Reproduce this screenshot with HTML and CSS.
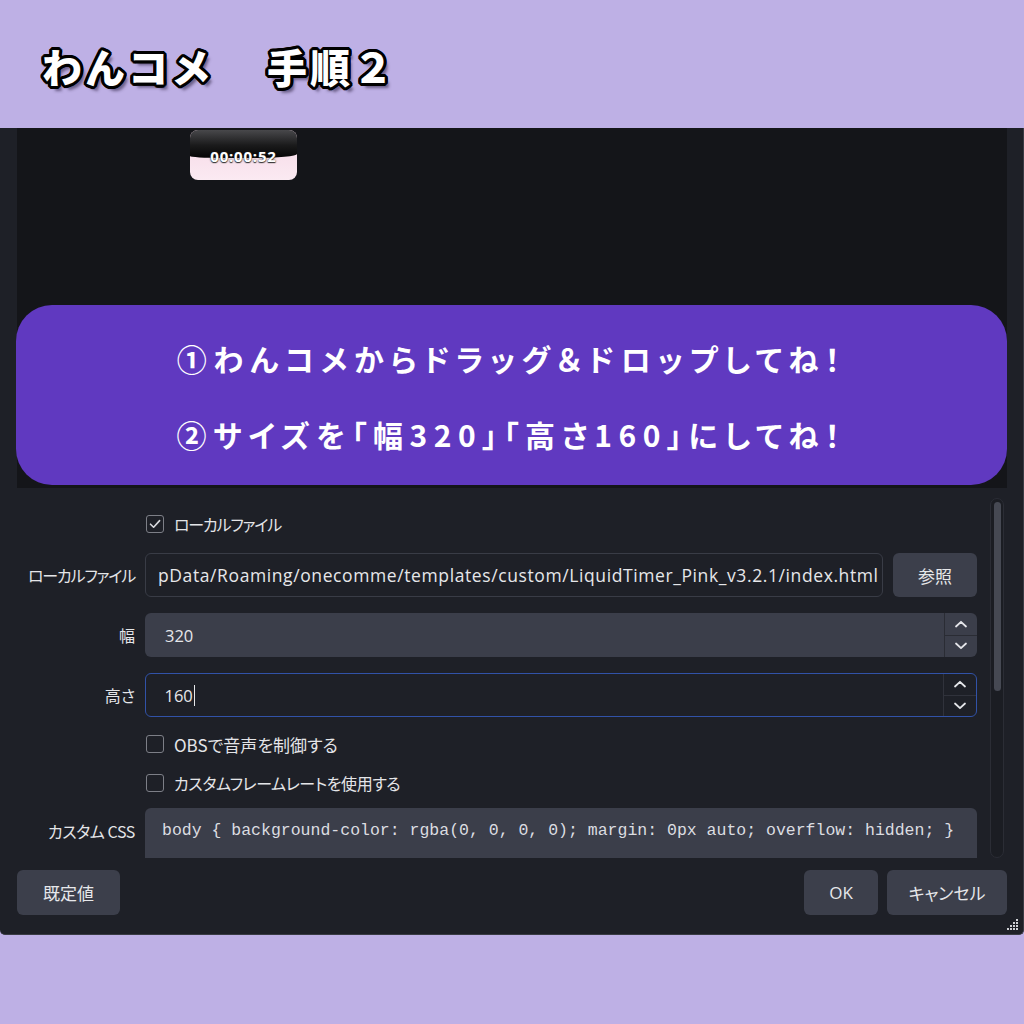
FILE: index.html
```html
<!DOCTYPE html>
<html lang="ja">
<head>
<meta charset="utf-8">
<title>わんコメ 手順2</title>
<link rel="stylesheet" href="styles.css">
</head>
<body>
<header class="top">
  <h1 class="title">わんコメ<span class="wide-space">　</span>手順２</h1>
</header>
<main class="dialog">
  <section class="preview">
    <div class="timer">
      <div class="timer-top"></div>
      <span class="timer-text">00:00:52</span>
    </div>
    <div class="banner">
      <p class="banner-line">①わんコメからドラッグ＆ドロップしてね！</p>
      <p class="banner-line">②サイズを「幅320」「高さ160」にしてね！</p>
    </div>
  </section>
  <section class="props">
    <div class="form">
      <div class="row row-check first">
        <span class="label"></span>
        <label class="check"><span class="box"><svg viewBox="0 0 18 18" width="18" height="18"><path d="M4.5 9.2 L7.6 12.2 L13.6 5.6" fill="none" stroke="#d8d9dd" stroke-width="1.6" stroke-linecap="round" stroke-linejoin="round"/></svg></span><span class="kana">ローカルファイル</span></label>
      </div>
      <div class="row row-field gap15">
        <span class="label kana">ローカルファイル</span>
        <div class="file-group">
          <div class="input file-input">pData/Roaming/onecomme/templates/custom/LiquidTimer_Pink_v3.2.1/index.html</div>
          <button class="btn browse">参照</button>
        </div>
      </div>
      <div class="row row-field gap16">
        <span class="label">幅</span>
        <div class="spin filled">
          <span class="spin-value">320</span>
          <span class="spin-btns">
            <span class="spin-up"><svg viewBox="0 0 14 8" width="14" height="8"><path d="M2 6.5 L7 1.8 L12 6.5" fill="none" stroke="#e4e5e9" stroke-width="1.8" stroke-linecap="round" stroke-linejoin="round"/></svg></span>
            <span class="spin-down"><svg viewBox="0 0 14 8" width="14" height="8"><path d="M2 1.5 L7 6.2 L12 1.5" fill="none" stroke="#e4e5e9" stroke-width="1.8" stroke-linecap="round" stroke-linejoin="round"/></svg></span>
          </span>
        </div>
      </div>
      <div class="row row-field gap16">
        <span class="label">高さ</span>
        <div class="spin focused">
          <span class="spin-value">160<span class="caret"></span></span>
          <span class="spin-btns">
            <span class="spin-up"><svg viewBox="0 0 14 8" width="14" height="8"><path d="M2 6.5 L7 1.8 L12 6.5" fill="none" stroke="#e4e5e9" stroke-width="1.8" stroke-linecap="round" stroke-linejoin="round"/></svg></span>
            <span class="spin-down"><svg viewBox="0 0 14 8" width="14" height="8"><path d="M2 1.5 L7 6.2 L12 1.5" fill="none" stroke="#e4e5e9" stroke-width="1.8" stroke-linecap="round" stroke-linejoin="round"/></svg></span>
          </span>
        </div>
      </div>
      <div class="row row-check gap13">
        <span class="label"></span>
        <label class="check"><span class="box"></span><span class="wide">OBSで音声を制御する</span></label>
      </div>
      <div class="row row-check gap11">
        <span class="label"></span>
        <label class="check"><span class="box"></span><span class="narrow">カスタムフレームレートを使用する</span></label>
      </div>
      <div class="row row-area gap11">
        <span class="label label-top narrow">カスタム CSS</span>
        <div class="textarea">body { background-color: rgba(0, 0, 0, 0); margin: 0px auto; overflow: hidden; }</div>
      </div>
    </div>
    <div class="scrollbar"><div class="thumb"></div></div>
  </section>
  <footer class="buttons">
    <button class="btn defaults">既定値</button>
    <span class="spacer"></span>
    <button class="btn ok">OK</button>
    <button class="btn cancel">キャンセル</button>
  </footer>
  <svg class="grip" viewBox="0 0 12 12" width="12" height="12">
    <rect x="9" y="0" width="2" height="2" fill="#cfd0d4"/>
    <rect x="6" y="3" width="2" height="2" fill="#cfd0d4"/>
    <rect x="9" y="3" width="2" height="2" fill="#cfd0d4"/>
    <rect x="3" y="6" width="2" height="2" fill="#cfd0d4"/>
    <rect x="6" y="6" width="2" height="2" fill="#cfd0d4"/>
    <rect x="9" y="6" width="2" height="2" fill="#cfd0d4"/>
    <rect x="0" y="9" width="2" height="2" fill="#cfd0d4"/>
    <rect x="3" y="9" width="2" height="2" fill="#cfd0d4"/>
    <rect x="6" y="9" width="2" height="2" fill="#cfd0d4"/>
    <rect x="9" y="9" width="2" height="2" fill="#cfd0d4"/>
  </svg>
</main>
</body>
</html>
```
FILE: styles.css
```css
* { box-sizing: border-box; }
html, body { margin: 0; padding: 0; }
body {
  width: 1024px;
  height: 1024px;
  overflow: hidden;
  background: #beb0e5;
  font-family: "Noto Sans CJK JP", "Noto Sans", sans-serif;
}

.top {
  height: 128px;
  display: flex;
  align-items: center;
  padding: 4px 0 0 42px;
}
.title {
  margin: 0;
  font-size: 40px;
  font-weight: 900;
  letter-spacing: 3px;
  color: #ffffff;
  line-height: 1;
  text-shadow:
    -3px 0 0 #000, 3px 0 0 #000, 0 -3px 0 #000, 0 3px 0 #000,
    -2px -2px 0 #000, 2px -2px 0 #000, -2px 2px 0 #000, 2px 2px 0 #000,
    -3px -1px 0 #000, 3px -1px 0 #000, -3px 1px 0 #000, 3px 1px 0 #000,
    -1px -3px 0 #000, 1px -3px 0 #000, -1px 3px 0 #000, 1px 3px 0 #000,
    4px 5px 3px rgba(40, 30, 60, 0.55);
}
.wide-space { letter-spacing: 13px; }

.dialog {
  position: relative;
  height: 807px;
  background: #1e2027;
  border-radius: 0 0 5px 5px;
  border-right: 1px solid #3a3c44;
  border-bottom: 1px solid #3a3c44;
  display: flex;
  flex-direction: column;
}

.preview {
  position: relative;
  flex-shrink: 0;
  margin-left: 17px;
  width: 990px;
  height: 360px;
  background: #141519;
  display: flex;
  flex-direction: column;
  justify-content: flex-end;
  padding-bottom: 3px;
}

.timer {
  position: absolute;
  left: 173px;
  top: 2px;
  width: 107px;
  height: 50px;
  border-radius: 8px;
  overflow: hidden;
  background: linear-gradient(180deg, #f5d6e4 0%, #fbeaf2 100%);
  display: flex;
  align-items: center;
  justify-content: center;
}
.timer-top {
  position: absolute;
  left: 0; top: 0; right: 0;
  height: 28px;
  background: linear-gradient(180deg, #48484b 0%, #1a1a1b 55%, #050505 100%);
  border-radius: 0 0 40% 30% / 0 0 4px 2px;
}
.timer-text {
  position: relative;
  margin-top: 2px;
  font-family: "Open Sans", "Liberation Sans", sans-serif;
  font-weight: 700;
  font-size: 15px;
  letter-spacing: 0.8px;
  color: #ffffff;
  text-shadow: 0 0 2px #222, 0 1px 1px #333;
}

.banner {
  margin-left: -1px;
  width: 991px;
  height: 180px;
  border-radius: 36px;
  background: #6039c0;
  display: flex;
  flex-direction: column;
  align-items: center;
  justify-content: center;
  gap: 32px;
  padding-top: 2px;
}
.banner-line {
  margin: 0;
  color: #ffffff;
  font-size: 30px;
  font-weight: 700;
  line-height: 44px;
  letter-spacing: 6.5px;
  font-feature-settings: "palt";
}

.props {
  flex-shrink: 0;
  margin-top: 10px;
  height: 360px;
  overflow: hidden;
  display: flex;
}
.form {
  width: 977px;
  display: flex;
  flex-direction: column;
}
.row {
  flex-shrink: 0;
  display: grid;
  grid-template-columns: 135px 832px;
  column-gap: 10px;
  align-items: center;
}
.row.first { margin-top: 12px; }
.gap15 { margin-top: 15px; }
.gap16 { margin-top: 16px; }
.gap13 { margin-top: 13px; }
.gap11 { margin-top: 11px; }
.row-area { align-items: start; }

.label {
  text-align: right;
  color: #e4e5e8;
  font-size: 16px;
  font-feature-settings: "palt";
  white-space: nowrap;
}
.label-top { padding-top: 11px; }
.kana { letter-spacing: -1.2px; }
.wide { font-size: 17px; }
.narrow { letter-spacing: -0.4px; }

.row-check { height: 28px; }
.check {
  display: flex;
  align-items: center;
  gap: 10px;
  padding-left: 1px;
  color: #e4e5e8;
  font-size: 16px;
  font-feature-settings: "palt";
}
.box {
  width: 18px;
  height: 18px;
  border: 1.5px solid #7d7f87;
  border-radius: 3px;
  display: flex;
  align-items: center;
  justify-content: center;
}
.box svg { display: block; margin: -1.5px; }

.row-field { height: 44px; }
.file-group {
  display: flex;
  gap: 10px;
  height: 44px;
}
.input {
  flex: 1;
  height: 44px;
  border: 1px solid #393c46;
  border-radius: 6px;
  background: #1e2027;
  color: #e6e7ea;
  font-family: "Open Sans", "Noto Sans", sans-serif;
  font-size: 17.5px;
  letter-spacing: 0.6px;
  display: flex;
  align-items: center;
  padding-left: 12px;
  white-space: nowrap;
  overflow: hidden;
}

.btn {
  border: none;
  border-radius: 6px;
  background: #3c3f4b;
  color: #e6e7ea;
  font-family: "Noto Sans CJK JP", "Open Sans", sans-serif;
  font-size: 17px;
  font-feature-settings: "palt";
  height: 45px;
  padding: 0;
}
.browse { width: 84px; height: 44px; }

.spin {
  height: 44px;
  border-radius: 6px;
  display: flex;
  align-items: stretch;
  overflow: hidden;
}
.spin.filled { background: #3b3e4a; }
.spin.focused { background: #1e2027; border: 1.5px solid #3152a8; }
.spin-value {
  flex: 1;
  display: flex;
  align-items: center;
  padding-left: 20px;
  font-family: "Open Sans", "Noto Sans", sans-serif;
  font-size: 16.5px;
  color: #e6e7ea;
}
.spin.focused .spin-value { padding-left: 18.5px; }
.caret {
  display: inline-block;
  width: 1px;
  height: 21px;
  background: #e6e7ea;
  margin-left: 1px;
}
.spin-btns {
  width: 33px;
  display: flex;
  flex-direction: column;
  border-left: 1px solid #2a2c34;
}
.spin-up, .spin-down {
  flex: 1;
  display: flex;
  align-items: center;
  justify-content: center;
}
.spin-up { border-bottom: 1px solid #2a2c34; }
.spin.focused .spin-btns { border-left-color: #30323b; }
.spin.focused .spin-up { border-bottom-color: #30323b; }

.textarea {
  height: 64px;
  border-radius: 6px;
  background: #3b3e4a;
  color: #dcdde1;
  font-family: "Liberation Mono", "DejaVu Sans Mono", monospace;
  font-size: 16.5px;
  padding: 13px 0 0 17px;
  white-space: pre;
  overflow: hidden;
}

.scrollbar {
  flex-shrink: 0;
  margin-left: 13px;
  width: 14px;
  height: 360px;
  border: 1px solid #2b2d35;
  border-radius: 7px;
  background: #1b1d23;
  padding: 3px 0 0 3px;
}
.thumb {
  width: 7px;
  height: 189px;
  border-radius: 4px;
  background: #464953;
}

.buttons {
  flex-shrink: 0;
  margin-top: 12px;
  padding: 0 16px 0 17px;
  display: flex;
  gap: 9px;
}
.spacer { flex: 1; }
.defaults { width: 103px; }
.ok { width: 74px; font-family: "Open Sans", "Noto Sans CJK JP", sans-serif; }
.cancel { width: 120px; }

.grip {
  position: absolute;
  right: 4px;
  bottom: 3px;
}
```
